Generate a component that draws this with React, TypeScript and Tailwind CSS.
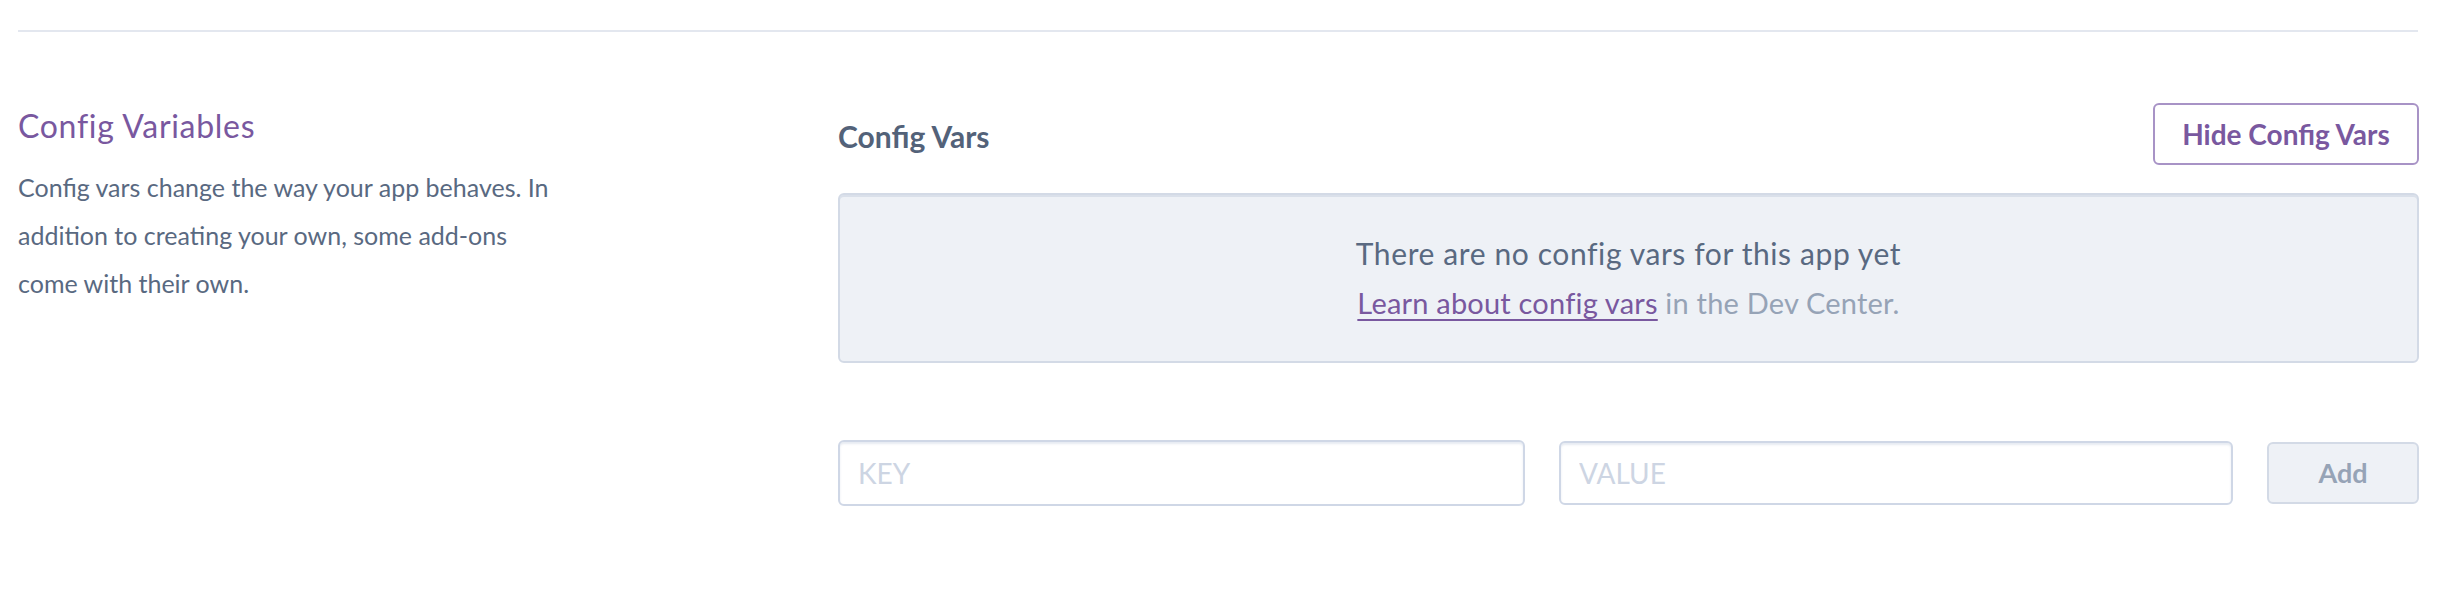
const font = { fontFamily: "Lato, 'Open Sans', sans-serif" };

const App = () => {
    return (
        <div className="w-[2458px] h-[596px] bg-white pl-[18px] pr-[40px]" style={font}>
            <div className="h-[30px]" />
            <div className="h-[2px] bg-[#e3e7ef]" />

            <div className="flex mt-[71px]">
                {/* left: description */}
                <div className="w-[820px] shrink-0">
                    <h2 className="mt-[3px] text-[32px] leading-[40px] tracking-[0.7px] text-[#79589f] font-normal">Config Variables</h2>
                    <p className="mt-[17px] w-[600px] text-[25px] leading-[48px] text-[#596981]">
                        Config vars change the way your app behaves. In<br />
                        addition to creating your own, some add-ons<br />
                        come with their own.
                    </p>
                </div>

                {/* right: vars */}
                <div className="flex-1">
                    <div className="flex items-center justify-between h-[62px]">
                        <h3 className="mt-[4px] text-[30px] leading-[36px] font-bold text-[#536279]">Config Vars</h3>
                        <button className="w-[266px] h-[62px] rounded-[6px] border-2 border-[#a893c6] bg-white text-[28px] font-bold text-[#79589f]">
                            Hide Config Vars
                        </button>
                    </div>

                    <div className="mt-[28px] h-[170px] rounded-[6px] border-2 border-[#d3dae6] bg-[#eef1f6] shadow-[inset_0_2px_0_rgba(180,192,212,0.35)] flex flex-col items-center justify-center">
                        <p className="text-[30px] leading-[49px] tracking-[0.6px] text-[#596981]">There are no config vars for this app yet</p>
                        <p className="text-[29px] leading-[49px] tracking-[0.2px] text-[#96a3b6]">
                            <a href="#" className="text-[#79589f] underline underline-offset-[5px] decoration-2">Learn about config vars</a> in the Dev Center.
                        </p>
                    </div>

                    <div className="mt-[77px] flex items-center gap-[34px]">
                        <input
                            placeholder="KEY"
                            className="w-[687px] h-[66px] rounded-[6px] border-2 border-[#cfd7e6] bg-white px-[18px] text-[28px] text-[#596981] placeholder:text-[#cdd5e3] shadow-[inset_0_2px_2px_rgba(207,215,230,0.5)] outline-none"
                        />
                        <input
                            placeholder="VALUE"
                            className="w-[674px] h-[64px] rounded-[6px] border-2 border-[#cfd7e6] bg-white px-[18px] text-[28px] text-[#596981] placeholder:text-[#cdd5e3] shadow-[inset_0_2px_2px_rgba(207,215,230,0.5)] outline-none"
                        />
                        <button className="w-[152px] h-[62px] rounded-[6px] border-2 border-[#d3dae6] bg-[#eef1f6] text-[27px] font-bold text-[#96a3b6]">
                            Add
                        </button>
                    </div>
                </div>
            </div>
        </div>
    )
};

export default App;
